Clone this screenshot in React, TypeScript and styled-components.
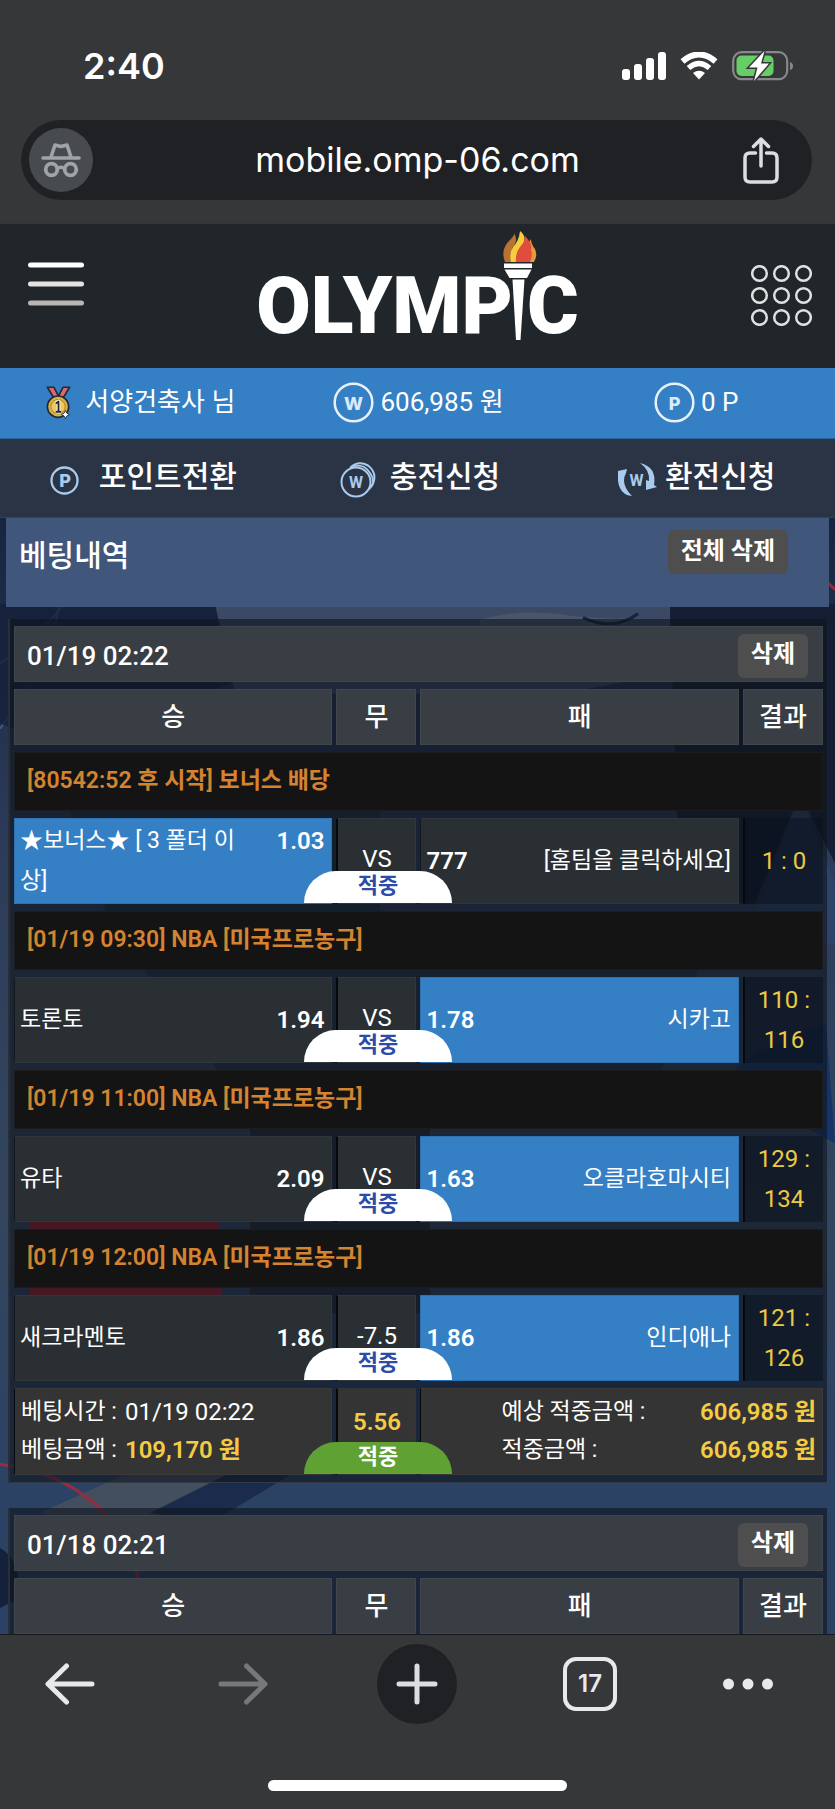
import React from "react";
import styled, { createGlobalStyle, css } from "styled-components";

const GlobalStyle = createGlobalStyle`
  * { box-sizing: border-box; }
  body { margin: 0; background: #363739; }
  button { font: inherit; color: inherit; border: 0; padding: 0; background: none; cursor: pointer; }
  a { color: inherit; text-decoration: none; }
`;

const uiFont = `Inter, "Liberation Sans", sans-serif`;
const siteFont = `Roboto, "Noto Sans CJK KR", sans-serif`;

const Shell = styled.div`
  height: 100vh;
  display: flex;
  flex-direction: column;
  background: #363739;
  color: #fff;
`;

const StatusBar = styled.div`
  display: flex;
  justify-content: space-between;
  align-items: center;
  padding: 44px 42px 32px 83px;
  font: 600 36px/44px ${uiFont};
`;

const StatusIcons = styled.div`
  display: flex;
  align-items: center;
  gap: 14px;
  svg { display: block; }
`;

const AddressBar = styled.div`
  display: flex;
  align-items: center;
  justify-content: space-between;
  height: 80px;
  flex: none;
  margin: 0 23px 23px 21px;
  padding: 0 32px 0 8px;
  border-radius: 40px;
  background: #202124;
`;

const Incognito = styled.span`
  width: 64px;
  height: 64px;
  border-radius: 50%;
  background: #474b4e;
  display: grid;
  place-items: center;
`;

const Url = styled.a`
  font: 400 34px/44px ${uiFont};
`;

const IconButton = styled.button`
  display: grid;
  place-items: center;
`;

const Site = styled.main`
  position: relative;
  flex: 1;
  min-height: 0;
  overflow: hidden;
  border-top: 1px solid #26364c;
  font-family: ${siteFont};
  background: #1c2a44;
`;

const Backdrop = styled.svg`
  position: absolute;
  inset: 0;
  width: 100%;
  height: 100%;
`;

const Content = styled.div`
  position: relative;
`;

const Header = styled.header`
  display: flex;
  justify-content: space-between;
  align-items: flex-start;
  height: 144px;
  padding: 7px 23px 0 28px;
  background: #21262a;
`;

const MenuButton = styled(IconButton)`
  margin-top: 31px;
`;

const GridButton = styled(IconButton)`
  margin-top: 34px;
`;

const Logo = styled.a`
  display: flex;
  height: 110px;
  font: 900 79px/110px ${siteFont};
`;

const LogoText = styled.span`
  padding-top: 20px;
`;

const Torch = styled.svg`
  flex: none;
  margin: 0 -10px;
`;

const TripleRow = styled.div`
  display: grid;
  grid-template-columns: repeat(3, 1fr);
`;

const Account = styled(TripleRow)`
  height: 71px;
  padding: 0 0 2px 2px;
  background: #357fc5;
  border-bottom: 1px solid #2a659f;
  font-size: 26px;
  line-height: 36px;
`;

const Nav = styled(TripleRow).attrs({ as: "nav" })`
  height: 79px;
  padding: 0 0 2px 5px;
  background: #2b3444;
  border-bottom: 1px solid #334159;
  font-size: 30px;
  font-weight: 500;
  line-height: 40px;
`;

const RowItem = styled.div<{ $gap: number }>`
  display: flex;
  align-items: center;
  justify-content: center;
  gap: ${(p) => p.$gap}px;
  svg { flex: none; }
`;

const NavLink = styled(RowItem).attrs({ as: "a" })<{ href: string }>`
  svg { margin-top: 6px; }
`;

const TitleBar = styled.section`
  display: flex;
  justify-content: space-between;
  align-items: flex-start;
  height: 89px;
  margin: 0 6px 12px;
  padding: 12px 41px 0 13px;
  background: #40567b;
`;

const Title = styled.h1`
  margin: 4px 0 0;
  font-size: 30px;
  font-weight: 500;
  line-height: 44px;
`;

const GrayButton = styled.button`
  height: 44px;
  padding: 0 13px 3px;
  border-radius: 6px;
  background: #4e4e4e;
  font-size: 24px;
  font-weight: 700;
  line-height: 40px;
  white-space: nowrap;
`;

const Slip = styled.div`
  margin: 0 8px 25px;
  border-left: 2px solid #2b2f35;
  border-bottom: 1px solid #343a44;
  background: rgba(14, 20, 30, 0.6);
`;

const SlipTable = styled.table`
  width: 100%;
  table-layout: fixed;
  border-collapse: separate;
  border-spacing: 4px 7px;
  font-size: 23px;
  line-height: 40px;
`;

const NarrowCol = styled.col`
  width: 80px;
`;

const raised = css`
  background: #383e43;
  border: 1px solid #40464a;
`;

const HeadingCell = styled.th`
  ${raised}
  height: 56px;
  padding: 3px 14px 0 12px;
  text-align: left;
  font-size: 26px;
  font-weight: 500;
`;

const HeadingLine = styled.div`
  display: flex;
  align-items: center;
  justify-content: space-between;
`;

const ColumnHead = styled.th`
  ${raised}
  height: 56px;
  padding: 0;
  font-size: 26px;
  font-weight: 500;
`;

const EventCell = styled.th`
  height: 59px;
  padding: 0 12px 2px;
  background: #141414;
  border: 1px solid #1c1c1d;
  color: #d48430;
  text-align: left;
  font-size: 23px;
  font-weight: 600;
`;

const TeamCell = styled.td<{ $picked?: boolean }>`
  height: 86px;
  padding: 0 7px 0 5px;
  background: ${(p) => (p.$picked ? "#357fc5" : "#2a2f33")};
  border: 1px solid ${(p) => (p.$picked ? "#2f72b2" : "#313639")};
  border-left-color: ${(p) => (p.$picked ? "#2f72b2" : "#14171b")};
`;

const TeamLine = styled.div`
  display: flex;
  justify-content: space-between;
  align-items: flex-start;
  gap: 24px;
`;

const Odds = styled.strong`
  flex: none;
  font-size: 24px;
  font-weight: 600;
`;

const DrawCell = styled.td`
  position: relative;
  height: 86px;
  padding: 0 0 5px;
  background: #2a2f33;
  border: 1px solid #313639;
  border-left: 2px solid #06080b;
  text-align: center;
  font-size: 24px;
`;

const ScoreCell = styled.td`
  height: 86px;
  padding: 0 8px;
  background: rgba(10, 15, 28, 0.5);
  border-left: 2px solid #06080b;
  color: #ecc944;
  text-align: center;
  font-size: 24px;
`;

const Badge = styled.span<{ $total?: boolean }>`
  position: absolute;
  z-index: 1;
  left: 50%;
  bottom: 0;
  width: 148px;
  height: 32px;
  margin-left: -73px;
  border-radius: 32px 32px 0 0;
  background: ${(p) => (p.$total ? "#5fa133" : "#fff")};
  color: ${(p) => (p.$total ? "#fff" : "#2b4ca8")};
  font-size: 22px;
  font-weight: 700;
  line-height: 30px;
`;

const SumCell = styled.td`
  height: 87px;
  padding: 0 6px;
  background: #343434;
  border: 1px solid #3c3a38;
  border-left-color: #06080b;
  line-height: 38px;
`;

const SumDrawCell = styled(DrawCell)`
  height: 87px;
  padding: 0 0 20px;
  background: #343434;
  color: #f5cb42;
  font-weight: 600;
`;

const Sums = styled.dl<{ $indent: number }>`
  display: grid;
  grid-template-columns: auto 1fr;
  column-gap: 8px;
  margin: 0;
  padding: 0 0 2px ${(p) => p.$indent}px;
  dd { margin: 0; font-size: 24px; text-align: ${(p) => (p.$indent ? "right" : "left")}; }
`;

const Money = styled.strong`
  color: #f5cb42;
  font-weight: 600;
`;

const Toolbar = styled.footer`
  flex: none;
  height: 175px;
  display: flex;
  flex-direction: column;
  justify-content: space-between;
  align-items: center;
  padding: 9px 0 18px;
  border-top: 1px solid #16191e;
  background: #363739;
`;

const ToolbarRow = styled.div`
  width: 100%;
  display: grid;
  grid-template-columns: 173fr 174fr 173fr 158fr 127fr;
  padding-left: 30px;
  font: 600 24px/30px ${uiFont};
`;

const ToolButton = styled(IconButton)<{ $round?: boolean }>`
  width: 80px;
  height: 80px;
  border-radius: 50%;
  background: ${(p) => (p.$round ? "#202124" : "transparent")};
`;

const TabCount = styled.span`
  width: 54px;
  height: 54px;
  display: grid;
  place-items: center;
  border: 4px solid #e8e9ec;
  border-radius: 13px;
  color: #e8e9ec;
`;

const HomeBar = styled.div`
  width: 299px;
  height: 11px;
  border-radius: 6px;
  background: #fff;
`;

const Scenery = () => (
  <Backdrop viewBox="0 0 835 1411" preserveAspectRatio="none" aria-hidden="true">
    <defs>
      <linearGradient id="sky" x1="0" y1="0" x2="0" y2="1">
        <stop offset="0.2" stopColor="#16243f" />
        <stop offset="0.45" stopColor="#2c3c5a" />
        <stop offset="0.7" stopColor="#33465e" />
        <stop offset="0.9" stopColor="#2c4265" />
      </linearGradient>
    </defs>
    <rect width="835" height="1411" fill="url(#sky)" />
    <path d="M215 380H670V450L560 470H235Z" fill="#3b4964" />
    <path d="M480 396q40-12 90-4 50 4 60 2-20 12-60 16h-90z" fill="#49566a" />
    <path d="M583 394q30 14 55-4" fill="none" stroke="#15233c" strokeWidth="3" />
    <path d="M670 380H835V640L800 570 755 680H680Z" fill="#161e34" />
    <path d="M800 570l35 90v60h-90z" fill="#2d4468" />
    <path d="M0 440q40-30 65-60M0 505q60-80 60-140" fill="none" stroke="#44597c" strokeWidth="2" />
    <path d="M0 380H215L230 460 60 520 0 500Z" fill="#15213a" opacity="0.8" />
    <path d="M60 560H380V700H110Z" fill="#1b2c38" opacity="0.7" />
    <path d="M140 740H700L660 850H220Z" fill="#252f3a" opacity="0.7" />
    <path d="M30 998h188q8 50 2 104H30z" fill="#9d1c2b" />
    <path d="M250 900H430V1090H250Z" fill="#20252f" opacity="0.8" />
    <path d="M826 800q-90 30-100 60l109 60z" fill="#173468" />
    <path d="M40 1290L150 1240H290L210 1300 120 1310z" fill="#434f5e" />
    <path d="M210 1300L310 1240h-60l-100 50z" fill="#1a2b4c" />
    <path d="M0 1241q70 10 105 50t45 120" fill="none" stroke="#992d3c" strokeWidth="3" />
    <path d="M827 358l8 8" stroke="#a81f2b" strokeWidth="3" />
    <path d="M0 1325q20 10 20 50l-20 10z" fill="#14213c" />
  </Backdrop>
);

const SignalIcons = () => (
  <StatusIcons>
    <svg width="44" height="28" viewBox="0 0 44 28" fill="#fff">
      <rect x="0" y="17" width="8" height="11" rx="3" />
      <rect x="12" y="12" width="8" height="16" rx="3" />
      <rect x="24" y="6" width="8" height="22" rx="3" />
      <rect x="36" y="0" width="8" height="28" rx="3" />
    </svg>
    <svg width="38" height="28" viewBox="0 0 38 28" fill="none" stroke="#fff">
      <path d="M2.5 9.5Q19-4.500 35.500 9.500" strokeWidth="6" />
      <path d="M8.500 16Q19 7 29.500 16" strokeWidth="5.500" />
      <path d="M19 27.500l-6-6.500q6-4.500 12 0z" fill="#fff" stroke="none" />
    </svg>
    <svg width="61" height="32" viewBox="0 0 61 32">
      <rect x="1.200" y="2.200" width="54" height="27" rx="8.500" fill="none" stroke="#87888a" strokeWidth="2.200" />
      <path d="M58 12q3 1 3 4t-3 4z" fill="#87888a" />
      <rect x="4.500" y="5.500" width="37" height="20.500" rx="5" fill="#65cf65" />
      <path d="M32.500 1L17 17.500h8.500L22 31 37 13.500H29z" fill="#fff" stroke="#363739" strokeWidth="3" paintOrder="stroke" />
    </svg>
  </StatusIcons>
);

const IncognitoIcon = () => (
  <svg width="40" height="36" viewBox="0 0 40 36" fill="none" stroke="#a0a4aa">
    <path d="M2 16h36" strokeWidth="3.600" strokeLinecap="round" />
    <path d="M10 15l4-12 6 1.500L26 3l4 12" strokeWidth="3.600" strokeLinejoin="round" />
    <circle cx="10.500" cy="27.500" r="5.800" strokeWidth="3.800" />
    <circle cx="29.500" cy="27.500" r="5.800" strokeWidth="3.800" />
    <path d="M16 26.500q4-2.500 8 0" strokeWidth="3.400" />
  </svg>
);

const ShareIcon = () => (
  <svg width="38" height="48" viewBox="0 0 38 48" fill="none" stroke="#dcdde0" strokeWidth="3.500" strokeLinecap="round" strokeLinejoin="round">
    <path d="M13.500 17H8q-5 0-5 5v19q0 5 5 5h22q5 0 5-5V22q0-5-5-5h-5.500" />
    <path d="M19 30V3M11.500 10.500L19 3l7.500 7.500" />
  </svg>
);

const MenuIcon = () => (
  <svg width="56" height="44" viewBox="0 0 56 44">
    <rect width="56" height="5" y="0.500" rx="2.500" fill="#fff" />
    <rect y="19.500" width="56" height="5" rx="2.500" fill="#e6e4e3" />
    <rect y="38.500" width="56" height="5" rx="2.500" fill="#b9b6b4" />
  </svg>
);

const DotsGridIcon = () => (
  <svg width="61" height="61" viewBox="0 0 61 61" fill="none" stroke="#dfe0e0" strokeWidth="2.500">
    {[8.5, 30.5, 52.5].map((y) => [8.5, 30.5, 52.5].map((x) => <circle key={`${x}-${y}`} cx={x} cy={y} r="7.300" />))}
  </svg>
);

const TorchIcon = () => (
  <Torch width="34" height="110" viewBox="0 0 34 110">
    <path d="M2 31Q-3 18 7 9q5-5 4-7 5 8-2 15v14z" fill="#b87333" />
    <path d="M8 31q-2-9 2-15 6-6 7-16 8 6 2 15-6 7-5 16z" fill="#f7cd3c" />
    <path d="M26 31q3-8 0-14-1-6 2-9 0 5 4 10 3 7-1 13z" fill="#e8983a" />
    <path d="M13 31q-1-9 4-15 5-5 5-11 8 8 6 14 2 5-1 12z" fill="#df4e3d" />
    <path d="M1 32.500h28v4.500H1zM1.500 38.500h27L24 47H6.500z" fill="#fff" />
    <path d="M9.500 48.500h12L17.500 109h-4.500z" fill="#fff" />
  </Torch>
);

const MedalIcon = () => (
  <svg width="25" height="35" viewBox="0 0 27 36" stroke="#222a35" strokeWidth="1.800" strokeLinejoin="round">
    <path d="M1.500 1.500h7l5 9.500 5-9.500h7L18 14H9z" fill="#dc6970" />
    <circle cx="13" cy="22.500" r="11.500" fill="#dfb245" />
    <circle cx="13" cy="22.500" r="7.800" fill="#efc75b" stroke="#a17a2c" strokeWidth="1" />
    <path d="M10.500 19l3-2v11M10.500 28h6" fill="none" stroke="#fff" strokeWidth="4" />
    <path d="M10.500 19l3-2v11M10.500 28h6" fill="none" strokeWidth="2" />
    <path d="M21 26.500l1.500 3 3 1.500-3 1.500-1.500 3-1.500-3-3-1.500 3-1.500z" fill="#fff" strokeWidth="1" />
  </svg>
);

const CoinIcon = ({ sign }: { sign: string }) => (
  <svg width="41" height="41" viewBox="0 0 41 41">
    <circle cx="20.500" cy="20.500" r="18.800" fill="none" stroke="#e8f1fa" strokeWidth="2.500" />
    <text x="20.500" y="27.500" textAnchor="middle" fill="#d9ebfb" fontFamily="Inter" fontWeight="800" fontSize="18">{sign}</text>
  </svg>
);

const tint = "#a9cbee";

const PointIcon = () => (
  <svg width="29" height="29" viewBox="0 0 29 29">
    <circle cx="14.500" cy="14.500" r="13" fill="none" stroke={tint} strokeWidth="2.300" />
    <text x="15" y="20.500" textAnchor="middle" fill={tint} fontFamily="Inter" fontWeight="800" fontSize="18">P</text>
  </svg>
);

const ChargeIcon = () => (
  <svg width="36" height="36" viewBox="0 0 36 36" fill="none" stroke={tint}>
    <circle cx="16" cy="20" r="14.500" strokeWidth="2" />
    <path d="M10 6Q18-2 28 3.500q8 6 6 15-1 5-5.500 9" strokeWidth="2" />
    <path d="M13 4.500q10-3 16 5t3 14" strokeWidth="1.800" />
    <text x="16" y="26" textAnchor="middle" fill={tint} stroke="none" fontFamily="Roboto" fontWeight="700" fontSize="16">W</text>
  </svg>
);

const ExchangeIcon = () => (
  <svg width="39" height="34" viewBox="0 0 39 34" fill={tint}>
    <path d="M0 8l9-2-1 4Q2 21 14 33 5 32 2 25-1 19 0 8z" />
    <path d="M22 0q17 4 14 22l3 2-11 3 0-10 3 1Q32 7 22 0z" />
    <text x="18.500" y="22.500" textAnchor="middle" fontFamily="Roboto" fontWeight="700" fontSize="16">W</text>
  </svg>
);

const ArrowIcon = ({ forward }: { forward?: boolean }) => (
  <svg width="50" height="42" viewBox="0 0 50 42" fill="none" stroke={forward ? "#77787b" : "#e8e9ec"} strokeWidth="5" strokeLinecap="round" strokeLinejoin="round">
    <path d={forward ? "M3 21h43M28.500 3L47 21 28.500 39" : "M47 21H4M21.500 3L3 21l18.500 18"} />
  </svg>
);

type Match = {
  event: string;
  home: string;
  homeOdds: string;
  draw: string;
  away: string;
  awayOdds: string;
  score: string;
  pick: "home" | "away";
};

const matches: Match[] = [
  { event: "[80542:52 후 시작] 보너스 배당", home: "★보너스★ [ 3 폴더 이상]", homeOdds: "1.03", draw: "VS", away: "[홈팀을 클릭하세요]", awayOdds: "777", score: "1 : 0", pick: "home" },
  { event: "[01/19 09:30] NBA [미국프로농구]", home: "토론토", homeOdds: "1.94", draw: "VS", away: "시카고", awayOdds: "1.78", score: "110 : 116", pick: "away" },
  { event: "[01/19 11:00] NBA [미국프로농구]", home: "유타", homeOdds: "2.09", draw: "VS", away: "오클라호마시티", awayOdds: "1.63", score: "129 : 134", pick: "away" },
  { event: "[01/19 12:00] NBA [미국프로농구]", home: "새크라멘토", homeOdds: "1.86", draw: "-7.5", away: "인디애나", awayOdds: "1.86", score: "121 : 126", pick: "away" },
];

const BetSlip = ({ date, rows, children }: { date: string; rows: Match[]; children?: React.ReactNode }) => (
  <Slip>
    <SlipTable>
      <colgroup>
        <col />
        <NarrowCol />
        <col />
        <NarrowCol />
      </colgroup>
      <thead>
        <tr>
          <HeadingCell colSpan={4}>
            <HeadingLine>
              {date}
              <GrayButton type="button">삭제</GrayButton>
            </HeadingLine>
          </HeadingCell>
        </tr>
        <tr>
          {["승", "무", "패", "결과"].map((label) => (
            <ColumnHead key={label} scope="col">{label}</ColumnHead>
          ))}
        </tr>
      </thead>
      <tbody>
        {rows.map((m) => (
          <React.Fragment key={m.event}>
            <tr>
              <EventCell colSpan={4}>{m.event}</EventCell>
            </tr>
            <tr>
              <TeamCell $picked={m.pick === "home"}>
                <TeamLine>
                  <span>{m.home}</span>
                  <Odds>{m.homeOdds}</Odds>
                </TeamLine>
              </TeamCell>
              <DrawCell>
                {m.draw}
                <Badge>적중</Badge>
              </DrawCell>
              <TeamCell $picked={m.pick === "away"}>
                <TeamLine>
                  <Odds>{m.awayOdds}</Odds>
                  <span>{m.away}</span>
                </TeamLine>
              </TeamCell>
              <ScoreCell>{m.score}</ScoreCell>
            </tr>
          </React.Fragment>
        ))}
        {children}
      </tbody>
    </SlipTable>
  </Slip>
);

export default function App() {
  return (
    <Shell>
      <GlobalStyle />
      <StatusBar>
        <span>2:40</span>
        <SignalIcons />
      </StatusBar>
      <AddressBar>
        <Incognito><IncognitoIcon /></Incognito>
        <Url href="#">mobile.omp-06.com</Url>
        <IconButton type="button" aria-label="공유"><ShareIcon /></IconButton>
      </AddressBar>
      <Site>
        <Scenery />
        <Content>
          <Header>
            <MenuButton type="button" aria-label="메뉴"><MenuIcon /></MenuButton>
            <Logo href="#">
              <LogoText>OLYMP</LogoText>
              <TorchIcon />
              <LogoText>C</LogoText>
            </Logo>
            <GridButton type="button" aria-label="전체 메뉴"><DotsGridIcon /></GridButton>
          </Header>
          <Account>
            <RowItem $gap={14}><MedalIcon />서양건축사 님</RowItem>
            <RowItem $gap={6}><CoinIcon sign="W" />606,985 원</RowItem>
            <RowItem $gap={6}><CoinIcon sign="P" />0 P</RowItem>
          </Account>
          <Nav>
            <NavLink href="#" $gap={20}><PointIcon />포인트전환</NavLink>
            <NavLink href="#" $gap={14}><ChargeIcon />충전신청</NavLink>
            <NavLink href="#" $gap={8}><ExchangeIcon />환전신청</NavLink>
          </Nav>
          <TitleBar>
            <Title>베팅내역</Title>
            <GrayButton type="button">전체 삭제</GrayButton>
          </TitleBar>
          <BetSlip date="01/19 02:22" rows={matches}>
            <tr>
              <SumCell>
                <Sums $indent={0}>
                  <dt>베팅시간 :</dt>
                  <dd>01/19 02:22</dd>
                  <dt>베팅금액 :</dt>
                  <dd><Money>109,170 원</Money></dd>
                </Sums>
              </SumCell>
              <SumDrawCell>
                5.56
                <Badge $total>적중</Badge>
              </SumDrawCell>
              <SumCell colSpan={2}>
                <Sums $indent={74}>
                  <dt>예상 적중금액 :</dt>
                  <dd><Money>606,985 원</Money></dd>
                  <dt>적중금액 :</dt>
                  <dd><Money>606,985 원</Money></dd>
                </Sums>
              </SumCell>
            </tr>
          </BetSlip>
          <BetSlip date="01/18 02:21" rows={[]} />
        </Content>
      </Site>
      <Toolbar>
        <ToolbarRow>
          <ToolButton type="button" aria-label="뒤로"><ArrowIcon /></ToolButton>
          <ToolButton type="button" aria-label="앞으로" disabled><ArrowIcon forward /></ToolButton>
          <ToolButton type="button" aria-label="새 탭" $round>
            <svg width="42" height="42" viewBox="0 0 42 42" stroke="#dcdde0" strokeWidth="5" strokeLinecap="round">
              <path d="M21 3v36M3 21h36" />
            </svg>
          </ToolButton>
          <ToolButton type="button"><TabCount>17</TabCount></ToolButton>
          <ToolButton type="button" aria-label="더보기">
            <svg width="50" height="12" viewBox="0 0 50 12" fill="#e8e9ec">
              <circle cx="5.500" cy="6" r="5.500" />
              <circle cx="25" cy="6" r="5.500" />
              <circle cx="44.500" cy="6" r="5.500" />
            </svg>
          </ToolButton>
        </ToolbarRow>
        <HomeBar />
      </Toolbar>
    </Shell>
  );
}
